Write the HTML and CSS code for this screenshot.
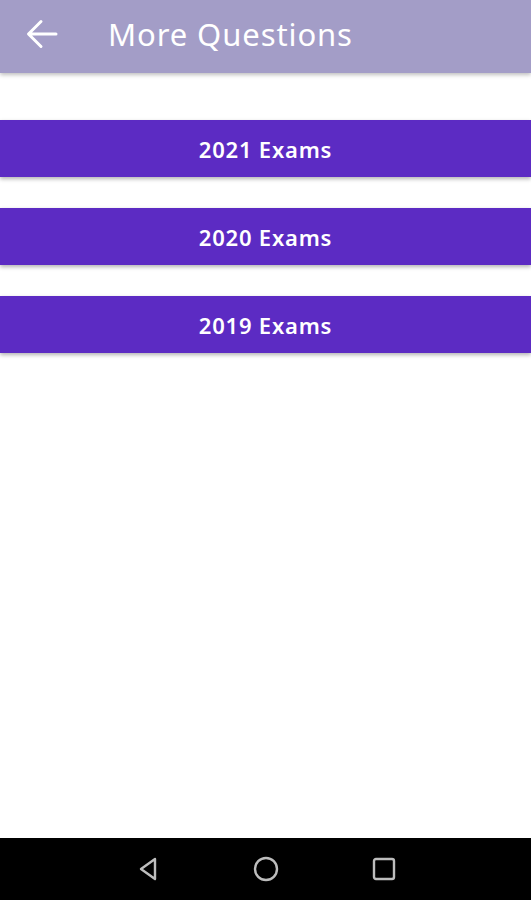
FILE: index.html
```html
<!DOCTYPE html>
<html lang="en">
<head>
    <meta charset="UTF-8">
    <meta name="viewport" content="width=device-width, initial-scale=1.0">
    <title>More Questions</title>
    <link rel="stylesheet" href="styles.css">
</head>
<body>
    <div class="screen">
        <header class="app-bar">
            <svg class="back" width="32" height="30" viewBox="0 0 32 30">
                <path d="M30 15 H3 M15 2.5 L2.5 15 L15 27.5" fill="none" stroke="#fff" stroke-width="3" stroke-linecap="round" stroke-linejoin="round"/>
            </svg>
            <h1 class="title">More Questions</h1>
        </header>

        <main class="exam-list">
            <button class="exam-btn">2021 Exams</button>
            <button class="exam-btn">2020 Exams</button>
            <button class="exam-btn">2019 Exams</button>
        </main>

        <nav class="nav-bar">
            <svg width="26" height="26" viewBox="0 0 26 26">
                <path d="M20 3 L6 13 L20 23 Z" fill="none" stroke="#bdbdbd" stroke-width="2.4" stroke-linejoin="round"/>
            </svg>
            <svg width="26" height="26" viewBox="0 0 26 26">
                <circle cx="13" cy="13" r="11" fill="none" stroke="#bdbdbd" stroke-width="2.4"/>
            </svg>
            <svg width="26" height="26" viewBox="0 0 26 26">
                <rect x="3" y="3" width="20" height="20" rx="2" fill="none" stroke="#bdbdbd" stroke-width="2.4"/>
            </svg>
        </nav>
    </div>
</body>
</html>
```

FILE: styles.css
```css
body {
    margin: 0;
    font-family: "Noto Sans", "Open Sans", sans-serif;
    background-color: #fff;
}
.screen {
    display: flex;
    flex-direction: column;
    height: 900px;
}
.app-bar {
    display: flex;
    align-items: center;
    height: 67px;
    padding: 0 0 6px 26px;
    background-color: #a39dc7;
    box-shadow: 0 2px 4px rgba(0, 0, 0, 0.25);
}
.back {
    margin-right: 50px;
}
.title {
    margin: 0;
    color: #fff;
    font-size: 31px;
    font-weight: 400;
    letter-spacing: 0.9px;
}
.exam-list {
    flex: 1;
    display: flex;
    flex-direction: column;
    gap: 31px;
    padding-top: 47px;
}
.exam-btn {
    height: 57px;
    border: none;
    background-color: #5c2bc3;
    color: #fff;
    font-family: inherit;
    font-size: 22px;
    font-weight: 600;
    letter-spacing: 0.8px;
    box-shadow: 0 2px 4px rgba(0, 0, 0, 0.3);
}
.nav-bar {
    display: flex;
    justify-content: center;
    align-items: center;
    gap: 92px;
    height: 62px;
    background-color: #000;
}
```
